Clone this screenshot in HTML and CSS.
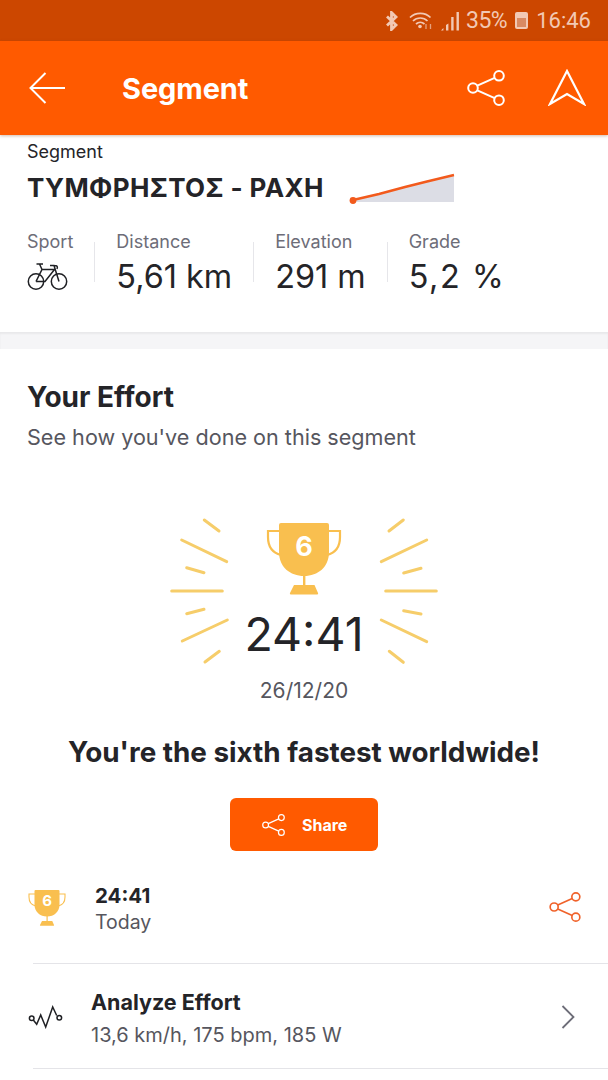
FILE: index.html
```html
<!DOCTYPE html>
<html lang="en">
<head>
    <meta charset="UTF-8">
    <meta name="viewport" content="width=device-width, initial-scale=1.0">
    <title>Segment</title>
    <link rel="stylesheet" href="styles.css">
</head>
<body>
    <svg class="defs" width="0" height="0">
        <symbol id="share" viewBox="0 0 38 36">
            <path d="M10.3 15.7 27.7 7.8M10.3 20.3 27.700 28.200" fill="none" stroke="currentColor" stroke-width="2"/>
            <circle cx="6" cy="18" r="4.800" fill="none" stroke="currentColor" stroke-width="2"/>
            <circle cx="32" cy="5.800" r="4.800" fill="none" stroke="currentColor" stroke-width="2"/>
            <circle cx="32" cy="30.200" r="4.800" fill="none" stroke="currentColor" stroke-width="2"/>
        </symbol>
        <symbol id="trophy" viewBox="0 0 76 72">
            <path d="M14 8H2v6c0 10 5 16 13 18M62 8h12v6c0 10-5 16-13 18" fill="none" stroke="#f9bf4f" stroke-width="2.200"/>
            <path d="M15 0H61a2 2 0 0 1 2 2V29C63 44 52 53 38 53S13 44 13 29V2a2 2 0 0 1 2-2Z" fill="#f9bf4f"/>
            <path d="M37 52h2.400v10H37Z" fill="#f9bf4f"/>
            <path d="M28 62H48.500L52 70a1 1 0 0 1-1 1.400H25a1 1 0 0 1-1-1.400Z" fill="#f9bf4f"/>
        </symbol>
    </svg>

    <div class="status-bar">
        <svg class="bt-icon" width="14" height="20" viewBox="0 0 14 20">
            <path d="M2 5.500 11 14 6.500 18.500V1.500L11 6 2 14.500" fill="none" stroke="#f2c9b4" stroke-width="2.800"/>
        </svg>
        <svg class="wifi-icon" width="24" height="20" viewBox="0 0 24 20">
            <path d="M1 6.500C6.500 1 16 1 21.500 6.500M4 10C8 6 14.500 6 18.500 10M7 13C9.500 10.800 13 10.800 15.500 13" fill="none" stroke="#f2c9b4" stroke-width="1.700"/>
            <circle cx="11" cy="15.500" r="1.800" fill="#f2c9b4"/>
            <path d="M17 13v5M21.500 18v-5" stroke="#e5a07c" stroke-width="1.300"/>
        </svg>
        <svg class="signal-icon" width="20" height="20" viewBox="0 0 20 20">
            <path d="M1 19.500h2.400V17ZM6 19.500h2.400V12.500L6 14ZM11.200 19.500h2.400V6H11.200ZM16.500 19.500h2.400V1H16.500Z" fill="#f2c9b4"/>
        </svg>
        <span class="status-pct">35%</span>
        <span class="battery"><span class="battery-fill"></span></span>
        <span class="status-time">16:46</span>
    </div>

    <header class="app-bar">
        <svg class="back-icon" width="37" height="32" viewBox="0 0 37 32">
            <path d="M36 16H2M16.500 1 1.500 16l15 15" fill="none" stroke="#fff" stroke-width="2"/>
        </svg>
        <h1 class="app-title">Segment</h1>
        <svg class="bar-share" width="38" height="36"><use href="#share"/></svg>
        <svg class="nav-icon" width="38" height="37" viewBox="0 0 38 37">
            <path d="M19 2 2 35 19 25 36 35Z" fill="none" stroke="#fff" stroke-width="2.200" stroke-linejoin="miter"/>
        </svg>
    </header>

    <section class="segment">
        <div class="segment-label">Segment</div>
        <div class="segment-title">
            <h2>ΤΥΜΦΡΗΣΤΟΣ - ΡΑΧΗ</h2>
            <svg class="profile" width="106" height="32" viewBox="0 0 106 32">
                <path d="M4 28 30 22 56 15 78 9.500 105 3V30H4Z" fill="#dcdde5"/>
                <path d="M4 28 30 22 56 15 78 9.500 105 3" fill="none" stroke="#f25a1c" stroke-width="2.400"/>
                <circle cx="4" cy="28.500" r="3.400" fill="#f25a1c"/>
            </svg>
        </div>
        <div class="stats">
            <div class="stat">
                <div class="stat-label">Sport</div>
                <svg class="bike-icon" width="41" height="27" viewBox="0 0 41 27">
                    <g fill="none" stroke="#1f2024" stroke-width="1.500">
                        <circle cx="9" cy="18.500" r="7.700"/>
                        <circle cx="32" cy="18.500" r="7.700"/>
                        <path d="M9 18.500 15 6.500H27.500L18 18.500H9M15 6.500 12.500 1M9.500 1H16M32 18.500 27 2.500H23M27.500 2.500C30 2.500 31 3.500 30 6"/>
                    </g>
                </svg>
            </div>
            <span class="stat-rule"></span>
            <div class="stat">
                <div class="stat-label">Distance</div>
                <div class="stat-value">5,61 km</div>
            </div>
            <span class="stat-rule"></span>
            <div class="stat">
                <div class="stat-label">Elevation</div>
                <div class="stat-value">291 m</div>
            </div>
            <span class="stat-rule"></span>
            <div class="stat">
                <div class="stat-label">Grade</div>
                <div class="stat-value stat-grade">5,2 %</div>
            </div>
        </div>
    </section>

    <div class="gap"></div>

    <section class="effort">
        <h2 class="effort-title">Your Effort</h2>
        <p class="effort-sub">See how you've done on this segment</p>

        <div class="hero">
            <svg class="rays" width="268" height="148" viewBox="170 517 268 148">
                <g stroke="#f6cd6a" stroke-width="3" stroke-linecap="round">
                    <path d="M204.300 520 219 531M181.700 540 226.700 561.700M186.700 567.700 204 572.700M171.700 591H222.300M186.700 613.700 204 609.300M182.300 641 227.300 620M205 662 219.300 651.300"/>
                    <path d="M403.300 520 389 531M426.700 540 381.300 561.700M421 568.300 403.700 573M436.300 591H385.700M421 614 403.700 610.700M426.700 641.700 381.300 620M403.300 662.300 389.300 651.300"/>
                </g>
            </svg>
            <div class="hero-trophy">
                <svg width="76" height="72"><use href="#trophy"/></svg>
                <span class="hero-rank">6</span>
            </div>
            <div class="hero-time">24:41</div>
            <div class="hero-date">26/12/20</div>
        </div>

        <p class="headline">You're the sixth fastest worldwide!</p>

        <div class="share-wrap">
            <button class="share-btn">
                <svg width="23" height="22"><use href="#share"/></svg>
                Share
            </button>
        </div>

        <div class="row row-best">
            <div class="row-trophy">
                <svg width="38" height="36"><use href="#trophy"/></svg>
                <span class="row-rank">6</span>
            </div>
            <div class="row-text">
                <div class="row-title">24:41</div>
                <div class="row-sub">Today</div>
            </div>
            <svg class="row-share" width="32" height="30"><use href="#share"/></svg>
        </div>

        <div class="row row-analyze">
            <svg class="analyze-icon" width="35" height="24" viewBox="0 0 35 24">
                <path d="M5.300 15 8.700 19.300 12.700 10 17.700 22 24.700 2 28.700 10.500" fill="none" stroke="#1f2024" stroke-width="1.500"/>
                <circle cx="3.700" cy="13.300" r="2.300" fill="none" stroke="#1f2024" stroke-width="1.500"/>
                <circle cx="31.300" cy="12.700" r="2.300" fill="none" stroke="#1f2024" stroke-width="1.500"/>
            </svg>
            <div class="row-text">
                <div class="row-title">Analyze Effort</div>
                <div class="row-sub">13,6 km/h, 175 bpm, 185 W</div>
            </div>
            <svg class="chevron" width="14" height="24" viewBox="0 0 14 24">
                <path d="M1.500 1 12.500 12 1.500 23" fill="none" stroke="#6d6d78" stroke-width="1.800"/>
            </svg>
        </div>
    </section>
</body>
</html>
```
FILE: styles.css
```css
html, body { margin: 0; padding: 0; }
body { width: 608px; height: 1080px; overflow: hidden; background: #fff; color: #242428; font-family: Inter, "Noto Sans", sans-serif; }
h1, h2, p { margin: 0; }
.defs { position: absolute; }

.status-bar { height: 41px; background: #cc4700; color: #f2c9b4; display: flex; align-items: center; padding-right: 17px; justify-content: flex-end; font-family: Roboto, sans-serif; font-size: 22px; }
.bt-icon { margin-right: 10px; }
.wifi-icon { margin-right: 7px; }
.signal-icon { margin-right: 6px; }
.status-pct { margin-right: 8px; font-size: 23px; letter-spacing: -0.5px; }
.battery { width: 13px; height: 17px; background: #f2c9b4; border-radius: 2px; margin-right: 8px; display: flex; align-items: flex-end; justify-content: center; padding-bottom: 2px; box-sizing: border-box; }
.battery-fill { width: 9px; height: 9px; background: #d98a62; }

.app-bar { height: 94px; background: #ff5a00; display: flex; align-items: center; box-shadow: 0 1px 3px rgba(120, 60, 20, 0.35); position: relative; }
.back-icon { margin-left: 29px; }
.app-title { margin-left: 56px; color: #fff; font-size: 29px; font-weight: 700; flex: 1; letter-spacing: -0.1px; }
.bar-share { color: #fff; margin-right: 43px; margin-top: -1px; }
.nav-icon { margin-right: 22px; margin-top: -1px; }

.segment { height: 197px; box-sizing: border-box; padding: 7px 27px 0; }
.segment-label { font-size: 18px; line-height: 20px; }
.segment-title { display: flex; align-items: center; height: 36px; margin-top: 7px; }
.segment-title h2 { font-size: 26px; font-weight: 700; letter-spacing: 0.4px; }
.profile { margin-left: 25px; margin-top: 1px; }
.stats { display: flex; margin-top: 26px; }
.stat { display: flex; flex-direction: column; }
.stat-label { font-size: 18px; line-height: 22px; color: #6d6d78; }
.stat-value { font-size: 32.400px; line-height: 40px; margin-top: 4px; font-weight: 400; }
.stat-grade { letter-spacing: 1.600px; }
.stat-rule { width: 1px; height: 40px; background: #e6e6ea; margin: 11px 21px 0; }
.bike-icon { margin-top: 10px; }

.gap { height: 17px; background: #f5f5f7; box-shadow: inset 0 2px 2px rgba(0, 0, 0, 0.05); }

.effort-title { margin: 32px 27px 0; font-size: 28px; line-height: 32px; font-weight: 700; }
.effort-sub { margin: 11px 27px 0; font-size: 21.600px; line-height: 26px; color: #56565e; }

.hero { position: relative; display: flex; flex-direction: column; align-items: center; margin-top: 73px; }
.rays { position: absolute; left: 170px; top: -6px; }
.hero-trophy { position: relative; width: 76px; height: 72px; }
.hero-rank { position: absolute; left: 0; right: 0; top: 4px; text-align: center; font-size: 27px; line-height: 40px; font-weight: 700; color: #fff; }
.hero-time { font-size: 46.500px; line-height: 60px; margin-top: 9px; font-weight: 400; }
.hero-date { font-size: 21px; line-height: 24px; color: #56565e; margin-top: 15px; }

.headline { text-align: center; font-size: 27.800px; line-height: 34px; font-weight: 700; margin-top: 32px; }

.share-wrap { display: flex; justify-content: center; margin-top: 29px; }
.share-btn { width: 148px; height: 53px; border: 0; border-radius: 6px; background: #ff5a00; color: #fff; font-family: inherit; font-size: 16px; font-weight: 700; display: flex; align-items: center; gap: 17px; padding: 0 0 0 32px; }

.row { display: flex; align-items: center; margin-left: 33px; border-bottom: 1px solid #e4e4e8; }
.row-text { flex: 1; }
.row-title { font-size: 21.500px; line-height: 26px; font-weight: 700; }
.row-sub { font-size: 20px; line-height: 26px; color: #56565e; }
.row-best { height: 113px; box-sizing: border-box; }
.row-best .row-title { font-size: 20.500px; }
.row-best .row-sub { font-size: 19.500px; }
.row-trophy { position: relative; width: 38px; height: 36px; margin-left: -5px; margin-right: 29px; margin-top: 2px; }
.row-rank { position: absolute; left: 0; right: 0; top: 1px; text-align: center; font-size: 15px; line-height: 20px; font-weight: 700; color: #fff; }
.row-best .row-text { margin-top: 4px; }
.row-share { color: #f0622a; margin-right: 27px; margin-top: -1px; }
.row-analyze { height: 105px; box-sizing: border-box; }
.analyze-icon { margin-left: -5px; margin-right: 28px; margin-top: 2px; }
.row-analyze .row-text { margin-top: 4px; }
.row-analyze .row-sub { margin-top: 7px; }
.chevron { margin-right: 33px; margin-top: 2px; }
```
